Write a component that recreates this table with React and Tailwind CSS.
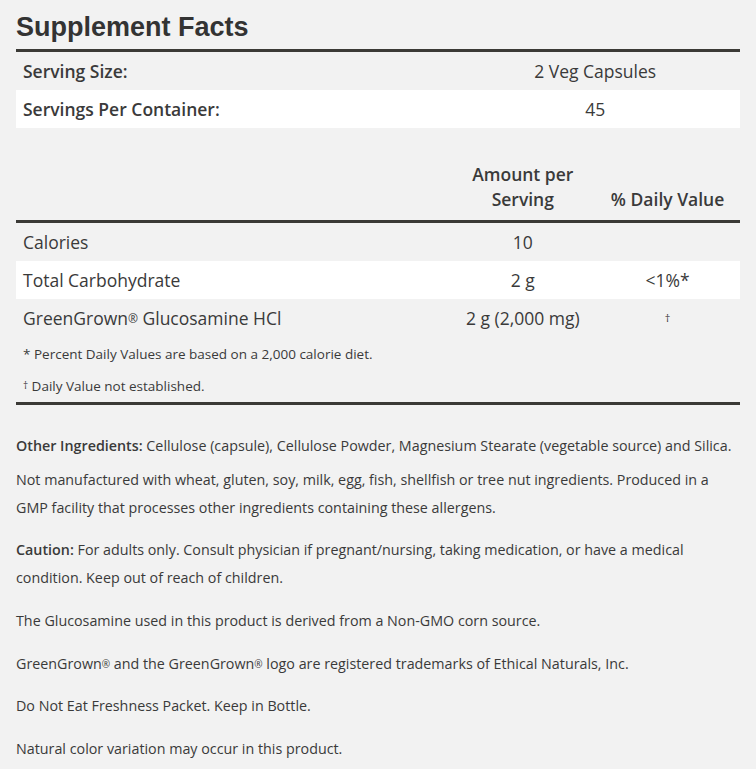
import React from 'react';

const rows = [
  { name: 'Calories', amount: '10', dv: '', bg: 'bg-[#f2f2f2]' },
  { name: 'Total Carbohydrate', amount: '2 g', dv: '<1%*', bg: 'bg-white' },
  { name: 'GreenGrown', reg: true, rest: ' Glucosamine HCl', amount: '2 g (2,000 mg)', dv: '†', bg: 'bg-[#f2f2f2]', small: true },
];

export default function App() {
  return (
    <div className="min-h-screen bg-[#f2f2f2] text-[#3a3a3a] px-4 pt-[10px] font-['Open_Sans',sans-serif]">
      <h1 className="font-['Liberation_Sans',Arial,sans-serif] font-bold text-[27px] leading-[34px] text-[#333]">Supplement Facts</h1>

      {/* serving info */}
      <div className="mt-[5px] border-t-[3px] border-[#3b3a36]">
        <div className="flex h-[38px] items-center text-[17.5px] bg-[#f2f2f2]">
          <div className="w-[60%] pl-[7px] font-semibold">Serving Size:</div>
          <div className="w-[40%] text-center">2 Veg Capsules</div>
        </div>
        <div className="flex h-[38px] items-center text-[17.5px] bg-white">
          <div className="w-[60%] pl-[7px] font-semibold">Servings Per Container:</div>
          <div className="w-[40%] text-center">45</div>
        </div>
      </div>

      {/* nutrient table */}
      <div className="mt-[34px] flex items-end text-[17.5px] font-semibold leading-[25px] pb-[8px]">
        <div className="w-[60%]" />
        <div className="w-[20%] text-center">Amount per<br />Serving</div>
        <div className="w-[20%] text-center">% Daily Value</div>
      </div>
      <div className="border-t-[3px] border-[#3b3a36]">
        {rows.map((r) => (
          <div key={r.name} className={`flex h-[38px] items-center text-[17.5px] ${r.bg}`}>
            <div className="w-[60%] pl-[7px]">
              {r.name}
              {r.reg && <sup className="text-[12px] relative -top-[2px]">®</sup>}
              {r.rest}
            </div>
            <div className="w-[20%] text-center">{r.amount}</div>
            <div className={`w-[20%] text-center ${r.small ? 'text-[11px]' : ''}`}>{r.dv}</div>
          </div>
        ))}
        <div className="pl-[7px] text-[13.5px] leading-[32px] pt-[1px]">
          <div>* Percent Daily Values are based on a 2,000 calorie diet.</div>
          <div className="-mb-[1px]"><span className="text-[10px] relative -top-[2px]">†</span> Daily Value not established.</div>
        </div>
      </div>
      <div className="border-t-[3px] border-[#3b3a36]" />

      {/* other info */}
      <div className="text-[14.3px] leading-[28px] pt-[27px]">
        <p><span className="font-semibold">Other Ingredients:</span> Cellulose (capsule), Cellulose Powder, Magnesium Stearate (vegetable source) and Silica.</p>
        <p className="mt-[6px]">Not manufactured with wheat, gluten, soy, milk, egg, fish, shellfish or tree nut ingredients. Produced in a GMP facility that processes other ingredients containing these allergens.</p>
        <p className="mt-[14px]"><span className="font-semibold">Caution:</span> For adults only. Consult physician if pregnant/nursing, taking medication, or have a medical condition. Keep out of reach of children.</p>
        <p className="mt-[15px]">The Glucosamine used in this product is derived from a Non-GMO corn source.</p>
        <p className="mt-[15px]">GreenGrown<sup className="text-[10px] relative -top-[1px]">®</sup> and the GreenGrown<sup className="text-[10px] relative -top-[1px]">®</sup> logo are registered trademarks of Ethical Naturals, Inc.</p>
        <p className="mt-[14px]">Do Not Eat Freshness Packet. Keep in Bottle.</p>
        <p className="mt-[15px]">Natural color variation may occur in this product.</p>
      </div>
    </div>
  );
}
